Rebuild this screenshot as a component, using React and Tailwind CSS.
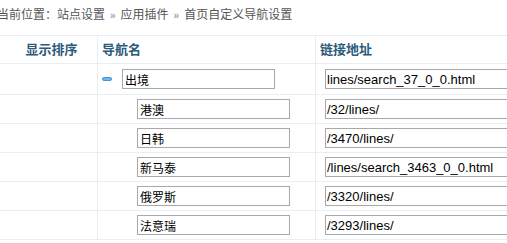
import React from 'react';

const rows = [
  { name: '出境', url: 'lines/search_37_0_0.html', parent: true },
  { name: '港澳', url: '/32/lines/' },
  { name: '日韩', url: '/3470/lines/' },
  { name: '新马泰', url: '/lines/search_3463_0_0.html' },
  { name: '俄罗斯', url: '/3320/lines/' },
  { name: '法意瑞', url: '/3293/lines/' },
];

const font = { fontFamily: '"Liberation Sans", "Noto Sans CJK SC", sans-serif' };

const Sep = () => (
  <span className="mx-[5px] text-[10px] font-bold text-[#8aa8cc]">»</span>
);

const App = () => {
  return (
    <div className="w-[507px] h-[243px] overflow-hidden bg-white" style={font}>
      {/* breadcrumb */}
      <div className="h-[35px] pt-[8px] text-[12px] leading-[14px] text-[#555] whitespace-nowrap">
        <span className="ml-[-3px]">当前位置：站点设置</span>
        <Sep />
        <span>应用插件</span>
        <Sep />
        <span>首页自定义导航设置</span>
      </div>

      {/* table */}
      <div className="border-t border-[#e6edf4] w-[600px]">
        <div className="grid grid-cols-[98px_218px_1fr] h-[28px] border-b border-[#e6edf4] text-[13px] font-bold text-[#2b5a7a]">
          <div className="flex items-center justify-center pl-[6px] border-r border-[#e6edf4]">显示排序</div>
          <div className="flex items-center pl-[4px] border-r border-[#e6edf4]">导航名</div>
          <div className="flex items-center pl-[4px]">链接地址</div>
        </div>

        {rows.map((row, i) => (
          <div
            key={i}
            className={`grid grid-cols-[98px_218px_1fr] border-b border-[#e6edf4] ${row.parent ? 'h-[31px]' : 'h-[29px]'}`}
          >
            <div className="border-r border-[#e6edf4]" />
            <div className={`flex items-center border-r border-[#e6edf4] ${row.parent ? 'pl-[4px]' : 'pl-[39px]'}`}>
              {row.parent && (
                <span className="w-[10px] h-[4px] mr-[10px] rounded-[2px] bg-[#6cb8f2] border border-[#4496dc]" />
              )}
              <input
                readOnly
                value={row.name}
                className="w-[153px] h-[20px] border border-[#a9a9a9] px-[2px] text-[12px] text-black outline-none"
                style={font}
              />
            </div>
            <div className="flex items-center pl-[9px]">
              <input
                readOnly
                value={row.url}
                className="w-[260px] h-[20px] border border-[#a9a9a9] px-[1px] text-[13px] text-black outline-none"
                style={font}
              />
            </div>
          </div>
        ))}
      </div>
    </div>
  );
};

export default App;
